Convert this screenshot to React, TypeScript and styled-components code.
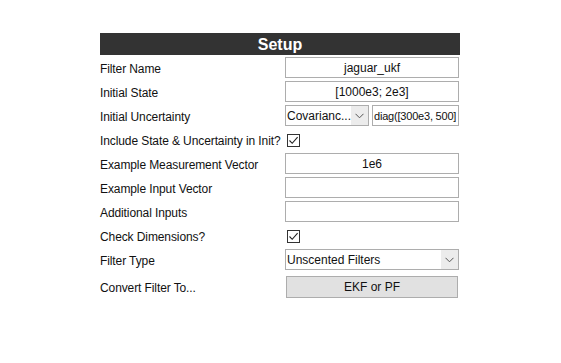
import React from 'react';
import styled, { createGlobalStyle } from 'styled-components';

const GlobalStyle = createGlobalStyle`
  body {
    margin: 0;
    background: #ffffff;
    font-family: "Liberation Sans", Arial, sans-serif;
  }
`;

const Page = styled.div`
  width: 561px;
  height: 363px;
  padding: 33px 0 0 100px;
  box-sizing: border-box;
`;

const Panel = styled.div`
  width: 360px;
`;

const Header = styled.div`
  height: 22px;
  background: #333333;
  color: #ffffff;
  font-size: 16px;
  font-weight: bold;
  line-height: 23px;
  text-align: center;
  margin-bottom: 2px;
`;

const Row = styled.div<{ $gap?: number }>`
  display: grid;
  grid-template-columns: 185px 174px;
  height: 24px;
  margin-top: ${p => p.$gap ?? 0}px;
`;

const Label = styled.div`
  font-size: 12px;
  color: #111;
  line-height: 21px;
  padding-top: 2px;
  white-space: nowrap;
  letter-spacing: -0.1px;
`;

const Field = styled.div<{ $align?: string; $tight?: boolean }>`
  height: 21px;
  box-sizing: border-box;
  border: 1px solid #adadad;
  background: #fff;
  font-size: ${p => (p.$tight ? '11px' : '12px')};
  letter-spacing: ${p => (p.$tight ? '-0.2px' : '0')};
  color: #111;
  line-height: 20px;
  text-align: ${p => p.$align ?? 'center'};
  padding: 0 ${p => (p.$tight ? '1px' : '2px')};
  white-space: nowrap;
  overflow: hidden;
`;

const Split = styled.div`
  display: grid;
  grid-template-columns: 84px 87px;
  gap: 3px;
`;

const Select = styled.div`
  height: 21px;
  box-sizing: border-box;
  border: 1px solid #adadad;
  background: #fff;
  display: flex;
  font-size: 12px;
  color: #111;
  line-height: 20px;
  overflow: hidden;
`;

const SelectText = styled.div`
  flex: 1;
  padding-left: 1px;
  white-space: nowrap;
  overflow: hidden;
`;

const Arrow = styled.div`
  width: 17px;
  background: #ececec;
  display: flex;
  align-items: center;
  justify-content: center;
`;

const CheckBox = styled.div`
  width: 13px;
  height: 13px;
  box-sizing: border-box;
  border: 1px solid #333;
  background: #fff;
  margin: 5px 0 0 2px;
  display: flex;
  align-items: center;
  justify-content: center;
`;

const Button = styled.div`
  height: 22px;
  margin-left: 1px;
  width: 172px;
  box-sizing: border-box;
  border: 1px solid #adadad;
  background: #e1e1e1;
  font-size: 12px;
  color: #111;
  line-height: 20px;
  text-align: center;
`;

const Chevron = () => (
  <svg width="9" height="6" viewBox="0 0 9 6">
    <path d="M0.5 0.8 L4.5 4.8 L8.5 0.8" fill="none" stroke="#555" strokeWidth="1" />
  </svg>
);

const Tick = () => (
  <svg width="11" height="11" viewBox="0 0 11 11">
    <path d="M1.5 5.5 L4.2 8.3 L9.6 2.2" fill="none" stroke="#222" strokeWidth="1.1" />
  </svg>
);

export default function App() {
  return (
    <>
      <GlobalStyle />
      <Page>
        <Panel>
          <Header>Setup</Header>
          <Row>
            <Label>Filter Name</Label>
            <Field>jaguar_ukf</Field>
          </Row>
          <Row>
            <Label>Initial State</Label>
            <Field>[1000e3; 2e3]</Field>
          </Row>
          <Row>
            <Label>Initial Uncertainty</Label>
            <Split>
              <Select>
                <SelectText>Covarianc...</SelectText>
                <Arrow><Chevron /></Arrow>
              </Select>
              <Field $align="left" $tight>diag([300e3, 500]</Field>
            </Split>
          </Row>
          <Row>
            <Label>Include State &amp; Uncertainty in Init?</Label>
            <CheckBox><Tick /></CheckBox>
          </Row>
          <Row>
            <Label>Example Measurement Vector</Label>
            <Field>1e6</Field>
          </Row>
          <Row>
            <Label>Example Input Vector</Label>
            <Field />
          </Row>
          <Row>
            <Label>Additional Inputs</Label>
            <Field />
          </Row>
          <Row>
            <Label>Check Dimensions?</Label>
            <CheckBox><Tick /></CheckBox>
          </Row>
          <Row>
            <Label>Filter Type</Label>
            <Select>
              <SelectText>Unscented Filters</SelectText>
              <Arrow><Chevron /></Arrow>
            </Select>
          </Row>
          <Row $gap={3}>
            <Label>Convert Filter To...</Label>
            <Button>EKF or PF</Button>
          </Row>
        </Panel>
      </Page>
    </>
  );
}
